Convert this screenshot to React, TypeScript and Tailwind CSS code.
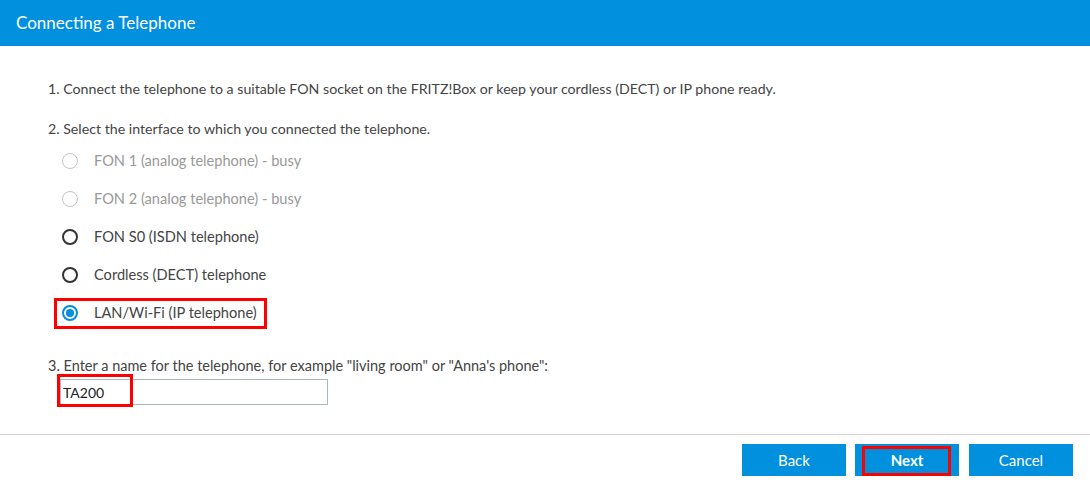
import React from "react";

const font = { fontFamily: "Lato, 'Noto Sans', sans-serif" };

function Radio({ state }: { state: "disabled" | "off" | "on" }) {
  if (state === "on") {
    return (
      <span className="w-4 h-4 rounded-full border-2 border-[#0090dd] flex items-center justify-center shrink-0">
        <span className="w-2 h-2 rounded-full bg-[#0090dd]" />
      </span>
    );
  }
  return (
    <span
      className={
        "w-4 h-4 rounded-full shrink-0 " +
        (state === "disabled" ? "border-[1.5px] border-[#c4c4c4]" : "border-2 border-[#333333]")
      }
    />
  );
}

const options: { label: string; state: "disabled" | "off" | "on" }[] = [
  { label: "FON 1 (analog telephone) - busy", state: "disabled" },
  { label: "FON 2 (analog telephone) - busy", state: "disabled" },
  { label: "FON S0 (ISDN telephone)", state: "off" },
  { label: "Cordless (DECT) telephone", state: "off" },
  { label: "LAN/Wi-Fi (IP telephone)", state: "on" },
];

export default function App() {
  return (
    <div className="w-[1090px] h-[483px] bg-white flex flex-col text-[#444444]" style={font}>
      <div className="h-[46px] bg-[#0090dd] flex items-center px-4 text-white text-[17px]">
        Connecting a Telephone
      </div>
      <div className="pl-12 flex flex-col text-[14.2px]">
        <div className="mt-[34px] h-[18px] leading-[18px]">
          1. Connect the telephone to a suitable FON socket on the FRITZ!Box or keep your cordless (DECT) or IP phone ready.
        </div>
        <div className="mt-[22px] h-[18px] leading-[18px]">
          2. Select the interface to which you connected the telephone.
        </div>
        <div className="mt-1 flex flex-col text-[14.6px]">
          {options.map((o) => (
            <div key={o.label} className="h-[38px] flex items-center">
              <div
                className={
                  "ml-[6px] h-[31px] inline-flex items-center gap-4 pl-[5px] pr-[7px] border-[3px] " +
                  (o.state === "on" ? "border-[#ff0000]" : "border-transparent")
                }
              >
                <Radio state={o.state} />
                <span className={o.state === "disabled" ? "text-[#999999]" : "text-[#444444]"}>{o.label}</span>
              </div>
            </div>
          ))}
        </div>
        <div className="mt-[25px] h-[18px] leading-[18px] text-[14.5px]">
          3. Enter a name for the telephone, for example "living room" or "Anna's phone":
        </div>
        <div className="mt-1 ml-3 relative w-[268px] h-[26px] border border-[#a9b8bf] flex items-center px-[2px] text-[#222222] text-[14px]">
          TA200
          <div className="absolute left-[-4px] top-[-6px] w-[76px] h-[33px] border-[3px] border-[#ff0000]" />
        </div>
      </div>
      <div className="mt-[29px] h-px bg-[#d4d4d4]" />
      <div className="mt-[9px] flex justify-end pr-[17px] text-white text-[15px]">
        <button className="w-[104px] h-8 bg-[#0090dd]">Back</button>
        <button className="ml-[9px] w-[104px] h-8 bg-[#0090dd] font-bold relative">
          Next
          <span className="absolute left-[7px] top-[2px] w-[89px] h-[30px] border-[3px] border-[#ff0000]" />
        </button>
        <button className="ml-[10px] w-[104px] h-8 bg-[#0090dd]">Cancel</button>
      </div>
    </div>
  );
}
